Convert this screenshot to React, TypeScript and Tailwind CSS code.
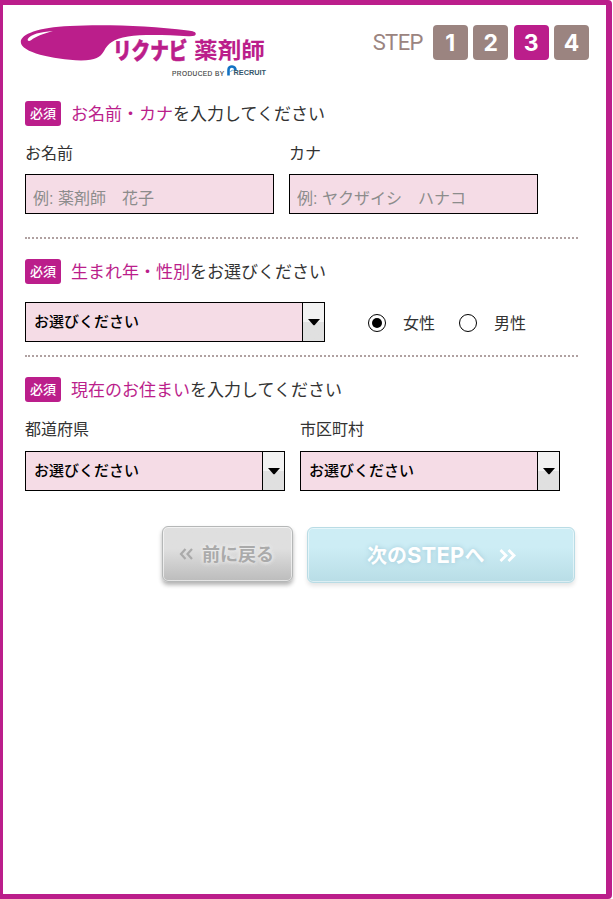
import { useState } from "react";
import type { ReactNode } from "react";

const STEPS = [1, 2, 3, 4];
const CURRENT_STEP = 3;

function Logo() {
  return (
    <svg width="250" height="58" viewBox="20 22 250 58" className="block" role="img">
      <path
        d="M20.800 42 C21 34 38 27.500 70 26 C105 24.300 150 25.800 188 30.500 C193 31 195.800 32 195.800 33.800 C195.800 36 193 36.400 188 36.200 C165 34.800 142 34.200 128 36.500 C113 39 108 43.500 104 51 C100 57.500 96 60.300 81 60.500 C52 59 21 52.500 20.800 42 Z"
        fill="#bb1e8b"
      />
      <path d="M27.800 39 C30 34.500 41 31.800 53 31 C44 33.500 36 36 31 40.300 C29 41.500 27.200 41 27.800 39 Z" fill="#fff" />
      <text
        transform="translate(113 58.800) scale(0.81 1)"
        fontSize="23"
        fill="#bb1e8b"
        stroke="#bb1e8b"
        strokeWidth="0.600"
        className="font-['Noto_Sans_CJK_JP',sans-serif] font-black"
      >
        リクナビ
      </text>
      <text
        transform="translate(194 57.800) scale(1.075 1)"
        fontSize="22"
        fill="#bb1e8b"
        className="font-['Noto_Sans_CJK_JP',sans-serif] font-bold"
      >
        薬剤師
      </text>
      <text
        x="172"
        y="75.500"
        textLength="52"
        fontSize="6.500"
        fill="#444"
        stroke="#444"
        strokeWidth="0.150"
        className="font-['Liberation_Sans',sans-serif]"
      >
        PRODUCED BY
      </text>
      <path d="M228.500 75.500 V70 C228.500 65.200 235.500 65.200 235.500 70.500" fill="none" stroke="#1272c4" strokeWidth="2.600" />
      <path d="M230.500 72 C231 70 233 70 235 70.500" fill="none" stroke="#6ab2e2" strokeWidth="1" />
      <text
        x="233.500"
        y="75.300"
        textLength="32.500"
        lengthAdjust="spacingAndGlyphs"
        fontSize="6.800"
        fill="#34566b"
        className="font-['Liberation_Sans',sans-serif] font-bold"
      >
        RECRUIT
      </text>
    </svg>
  );
}

function StepIndicator() {
  return (
    <div className="flex items-center">
      <span className="mr-[10px] font-[Roboto,sans-serif] text-[22px] leading-none tracking-[-0.600px] text-[#9b8480]">
        STEP
      </span>
      <div className="flex gap-[5.400px]">
        {STEPS.map((step) => (
          <span
            key={step}
            className={`flex h-[35px] w-[35px] items-center justify-center rounded-[4px] pt-[2px] font-[Inter,sans-serif] text-[23px] leading-none font-bold text-white ${
              step === CURRENT_STEP ? "bg-[#bb1e8b]" : "bg-[#9b8480]"
            }`}
          >
            {step}
          </span>
        ))}
      </div>
    </div>
  );
}

function SectionHeading({ subject, rest }: { subject: string; rest: string }) {
  return (
    <h2 className="flex h-[25px] items-start">
      <span className="mr-[10px] flex h-[25px] w-9 items-center justify-center rounded-[3px] bg-[#bb1e8b] pb-[2px] text-[13px] leading-none font-medium text-white">
        必須
      </span>
      <span className="text-[17px] leading-[23px]">
        <span className="text-[#bb1e8b]">{subject}</span>
        {rest}
      </span>
    </h2>
  );
}

function TextField({ label, placeholder }: { label: string; placeholder: string }) {
  return (
    <label className="block w-[249px]">
      <span className="block h-6 text-[16px] leading-[22px]">{label}</span>
      <input
        type="text"
        placeholder={placeholder}
        className="mt-[9px] block h-10 w-full border border-black bg-[#f5dce6] px-[7px] pt-[9px] font-['Liberation_Sans','Noto_Sans_CJK_JP',sans-serif] text-[16px] outline-none placeholder:text-[#8c8c8c]"
      />
    </label>
  );
}

function SelectBox({ className }: { className: string }) {
  return (
    <div className={`flex h-10 border border-black bg-[#f5dce6] ${className}`}>
      <span className="flex-1 pl-2 text-[15px] leading-[36px] font-medium text-black">お選びください</span>
      <span className="flex w-[22px] items-center justify-center border-l border-black bg-linear-to-b from-[#f2f2f2] from-50% to-[#e0e0e0] to-50%">
        <svg width="12" height="7" viewBox="0 0 12 7">
          <path d="M0 0 H12 L7 5.800 Q6 6.800 5 5.800 Z" fill="#000" />
        </svg>
      </span>
    </div>
  );
}

function Radio({ label, checked, onSelect }: { label: string; checked: boolean; onSelect: () => void }) {
  return (
    <label className="flex items-center">
      <input type="radio" name="gender" checked={checked} onChange={onSelect} className="sr-only" />
      <span className="flex h-[18px] w-[18px] items-center justify-center rounded-full border border-black">
        {checked && <span className="h-[10px] w-[10px] rounded-full bg-black" />}
      </span>
      <span className="ml-[17px] pb-[2px] text-[16px] leading-[22px]">{label}</span>
    </label>
  );
}

function Divider({ className }: { className: string }) {
  return <div className={`w-[553px] border-t-2 border-dotted border-[#b0a1a1] ${className}`} />;
}

function NavButton({ className, children }: { className: string; children: ReactNode }) {
  return (
    <button type="button" className={`flex h-14 items-center rounded-[6px] border font-bold ${className}`}>
      {children}
    </button>
  );
}

export default function App() {
  const [gender, setGender] = useState("female");

  return (
    <div className="h-[899px] bg-white">
      <main className="h-full w-[612px] rounded-r-[4px] border-t-[5px] border-r-[6px] border-b-[5px] border-l-[3px] border-[#bb1e8b] font-['Noto_Sans_CJK_JP',sans-serif] text-[#333]">
        <header className="flex h-24 items-start justify-between pt-[17px] pr-[17px] pl-[17px]">
          <Logo />
          <div className="pt-[3px]">
            <StepIndicator />
          </div>
        </header>

        <form className="pl-[22px]">
          <SectionHeading subject="お名前・カナ" rest="を入力してください" />
          <div className="mt-[15px] flex gap-[15px]">
            <TextField label="お名前" placeholder="例: 薬剤師　花子" />
            <TextField label="カナ" placeholder="例: ヤクザイシ　ハナコ" />
          </div>
          <Divider className="mt-[23px] mb-5" />

          <SectionHeading subject="生まれ年・性別" rest="をお選びください" />
          <div className="mt-[18px] flex items-center">
            <SelectBox className="w-[300px]" />
            <div className="ml-[43px] flex gap-6 pt-[2px]">
              <Radio label="女性" checked={gender === "female"} onSelect={() => setGender("female")} />
              <Radio label="男性" checked={gender === "male"} onSelect={() => setGender("male")} />
            </div>
          </div>
          <Divider className="mt-[13px] mb-5" />

          <SectionHeading subject="現在のお住まい" rest="を入力してください" />
          <div className="mt-[15px] flex gap-[15px]">
            <div>
              <p className="h-6 text-[16px] leading-[22px]">都道府県</p>
              <SelectBox className="mt-[10px] w-[260px]" />
            </div>
            <div>
              <p className="h-6 text-[16px] leading-[22px]">市区町村</p>
              <SelectBox className="mt-[10px] w-[260px]" />
            </div>
          </div>

          <div className="mt-[35px] flex items-start pl-[137px]">
            <NavButton className="w-[131px] border-[#b5b7b7] bg-linear-to-b from-[#dfdfdf] from-40% to-[#bcbcbc] pl-[16px] text-[18px] text-[#aaa] shadow-[0_3px_4px_rgba(0,0,0,0.3),inset_0_0_0_1px_rgba(255,255,255,0.6)] [text-shadow:0_0_4px_#eee,0_0_4px_#eee]">
              <svg width="14" height="12" viewBox="0 0 14 12" fill="none" stroke="currentColor" strokeWidth="2.200" className="mr-[9px]">
                <path d="M6.500 1 L2 6 L6.500 11 M13 1 L8.500 6 L13 11" />
              </svg>
              <span className="pb-[2px]">前に戻る</span>
            </NavButton>
            <NavButton className="mt-px ml-[14px] w-[268px] border-[#b9dce5] bg-linear-to-b from-[#cdedf5] from-35% to-[#b8dde6] pl-[59px] text-[20px] text-white shadow-[0_3px_4px_rgba(0,0,0,0.1),inset_0_0_0_1px_rgba(255,255,255,0.5)] [text-shadow:0_0_5px_#9fc9d8]">
              <span className="pb-px">次の</span>
              <span className="font-[Inter,sans-serif] text-[22px] tracking-[0.200px]">STEP</span>
              <span className="pb-px">へ</span>
              <svg width="17" height="13" viewBox="0 0 17 13" fill="none" stroke="currentColor" strokeWidth="2.800" className="ml-[14px]">
                <path d="M1.500 1 L7 6.500 L1.500 12 M9.500 1 L15 6.500 L9.500 12" />
              </svg>
            </NavButton>
          </div>
        </form>
      </main>
    </div>
  );
}
